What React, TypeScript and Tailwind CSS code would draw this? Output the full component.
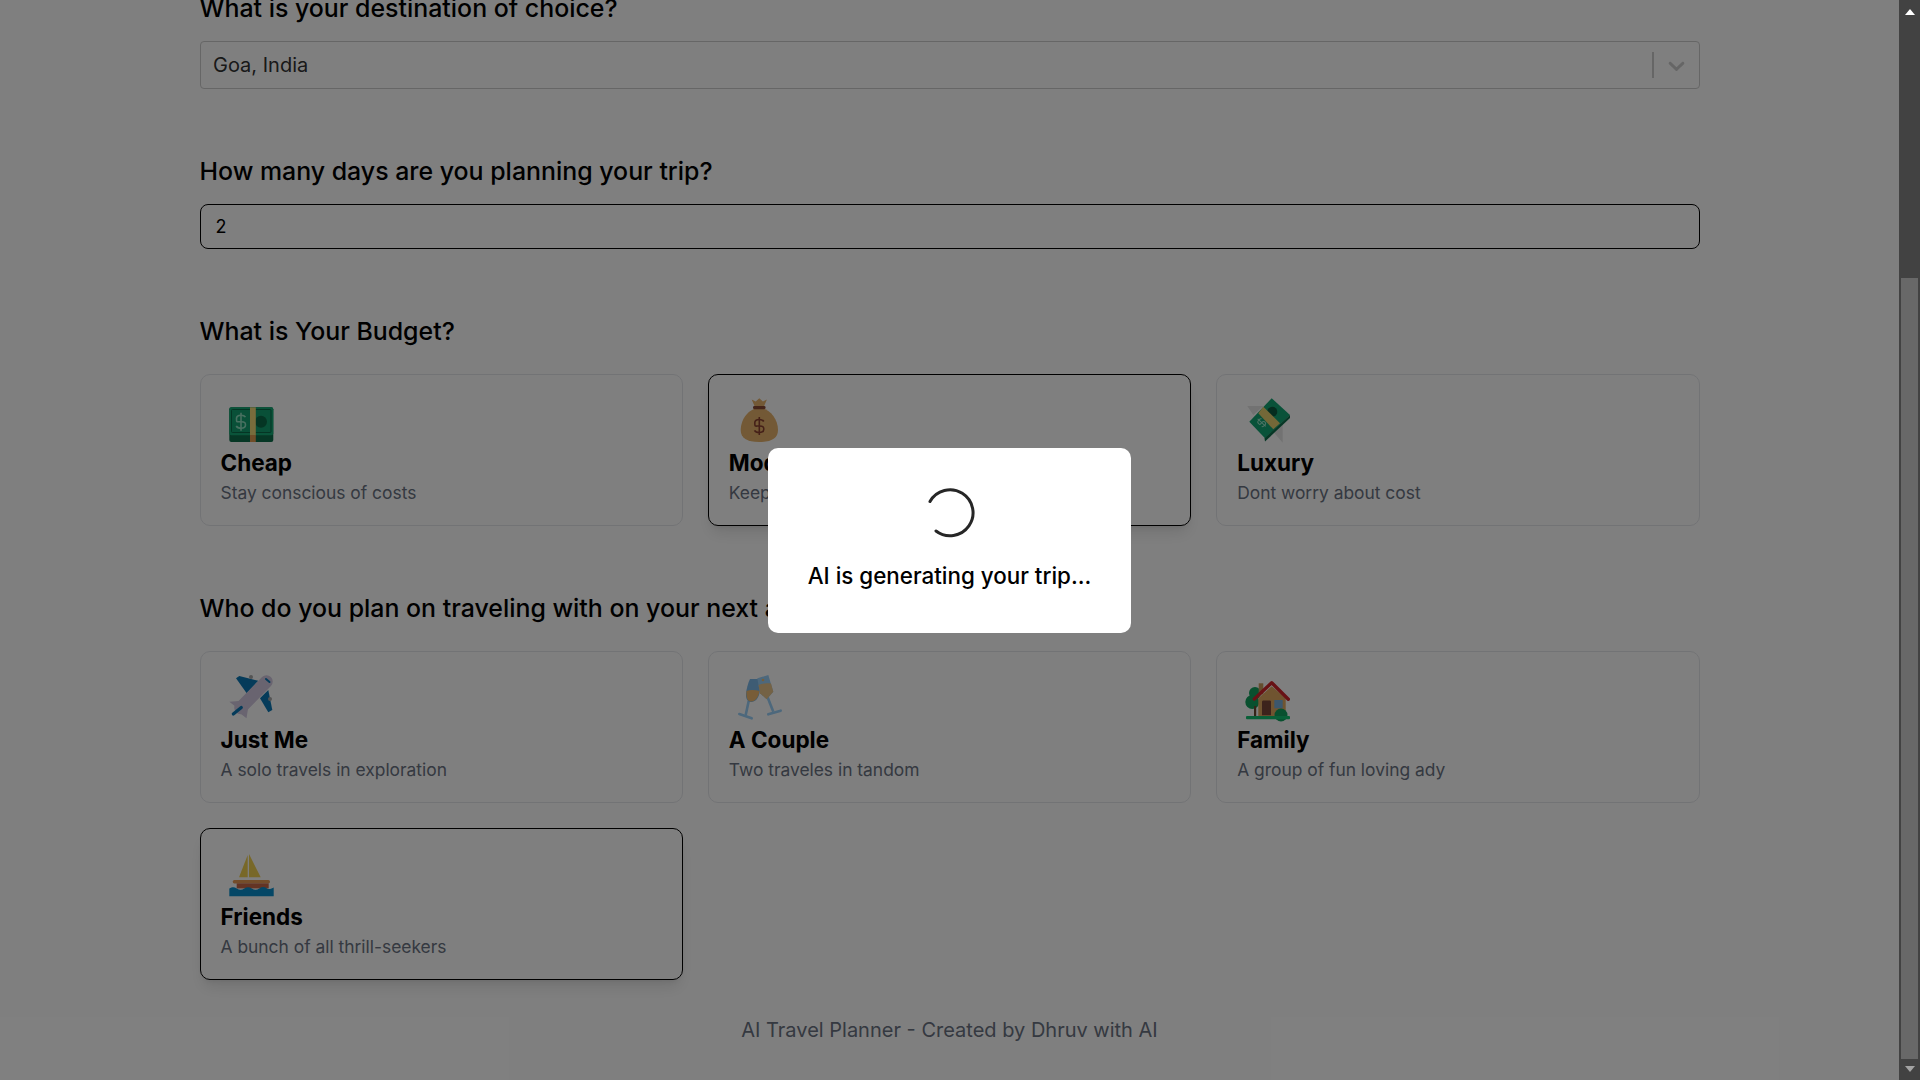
import type { ReactNode } from "react";

const Dollar = ({ x, y, h, color }: { x: number; y: number; h: number; color: string }) => {
  const u = h / 18;
  return (
    <g transform={`translate(${x} ${y}) scale(${u})`} fill="none" stroke={color} strokeWidth={1.6}>
      <path d="M4.5-4.5C3.5-6.2 1.500-6.500 0-6.500c-2.600 0-4.500 1.300-4.500 3.300C-4.500 1-4.500 0 0 0s4.500 1.500 4.500 3.300c0 2-2 3.200-4.500 3.200-1.800 0-3.800-.5-4.800-2.200" />
      <path d="M0-9v18" />
    </g>
  );
};

const Cash = () => (
  <>
    <rect x="8.3" y="12.3" width="44" height="34.7" rx="2" fill="#0c6e4a" />
    <rect x="8.3" y="12.3" width="44" height="28" rx="2" fill="#14a874" />
    <rect x="10.5" y="14.5" width="39.5" height="23" rx="1" fill="#12a070" stroke="#0a6a48" strokeWidth="1" />
    <circle cx="40" cy="26.7" r="6" fill="#0a6a48" />
    <Dollar x={20} y={26.7} h={18} color="#8fe0c0" />
    <rect x="29" y="12.3" width="5.8" height="28" fill="#f0d878" />
    <rect x="29" y="40" width="5.8" height="7" fill="#e09a50" />
  </>
);

const Bag = () => (
  <>
    <path d="M30.3 13C20 13 11.7 24 11.7 35c0 8 6 12 18.6 12S49 43 49 35C49 24 40.6 13 30.3 13z" fill="#e6b36c" />
    <path d="M22.7 4.500l4 2 3.600-3.200 3.600 3.200 4-2-3 7h-9.200z" fill="#e6b36c" />
    <rect x="24" y="11" width="12.6" height="3.2" rx="1.4" fill="#8a4a35" />
    <Dollar x={30.3} y={31} h={18} color="#8a4030" />
  </>
);

const Winged = () => (
  <>
    <path d="M10.3 11h16l-10 9z" fill="#e4e4e4" />
    <path d="M45.7 47.7V28.3l-9.4 8.4z" fill="#e4e4e4" />
    <path d="M34.7 3.3L53 20 28 43.3 12.3 26.7z" fill="#12a472" />
    <path d="M53 20v3L28 46.5l-.5-3.2z" fill="#0c6e4a" />
    <circle cx="35.3" cy="16.7" r="5" fill="#0a5a3f" />
    <path d="M26.3 11.7L43 28.3l-6.7 6L21.3 18.3z" fill="#e6d070" />
    <g transform="rotate(-47 24.7 27.7)">
      <Dollar x={24.7} y={27.7} h={11} color="#9be6c8" />
    </g>
  </>
);

const Plane = () => (
  <>
    <path d="M15 6.3L18.3 4l19 4.7L25.7 21.3z" fill="#0a77b5" />
    <path d="M39 26.3L47.3 18l4 20-4 2.3z" fill="#0a77b5" />
    <circle cx="30" cy="5" r="2" fill="#a8a8a8" />
    <circle cx="49" cy="27" r="2" fill="#a8a8a8" />
    <path d="M8.3 29.7l12.7-1L27 37l-1.500 9.300-5.500-4.300-3-5.500z" fill="#d2c8e0" />
    <path d="M45.500 9.500L19.500 36" stroke="#d2c8e0" strokeWidth="12.500" strokeLinecap="round" />
    <path d="M12.300 42l8-6.500" stroke="#0a77b5" strokeWidth="3.200" strokeLinecap="round" />
    <path d="M45 7l3.500 3" stroke="#0a77b5" strokeWidth="2" strokeLinecap="round" />
  </>
);

const Glasses = () => (
  <>
    <path d="M16.700 43l3-14" stroke="#9ad0f8" strokeWidth="2.600" />
    <path d="M10.300 42l12.400 4.300" stroke="#9ad0f8" strokeWidth="2.600" strokeLinecap="round" />
    <path d="M21 7h8c2 4 2.500 9 1.500 14-1 5-4 9-8.500 9-3.500 0-5.300-3.500-5-8 .4-5 2-11 4-15z" fill="#7db8e8" />
    <path d="M17.500 19c4-1.500 9-1 13 0-1 6-4 10.500-8.500 10.500-3.500 0-5-4-4.500-10.500z" fill="#f0bb70" />
    <path d="M38.500 25l5.800 14.700" stroke="#9ad0f8" strokeWidth="2.600" />
    <path d="M39.300 42.300l12.400-3.600" stroke="#9ad0f8" strokeWidth="2.600" strokeLinecap="round" />
    <path d="M28.300 6.300L39.300 3l5 16.700-6.600 7.600-6.700-6z" fill="#9ad0f8" />
    <path d="M29.500 13c5-2 8-2 12.500-1.500l2.300 8.200-6.600 7.600-6.700-6z" fill="#e8c48a" />
    <circle cx="34" cy="8" r="1.300" fill="#f0bb70" />
  </>
);

const House = () => (
  <>
    <circle cx="18" cy="21" r="6" fill="#12a05e" />
    <circle cx="15.300" cy="30" r="7" fill="#12a05e" />
    <rect x="17" y="34" width="2.200" height="10" fill="#6a4a30" />
    <rect x="21.700" y="11.300" width="4.600" height="11" fill="#c89a5c" />
    <path d="M21.300 26.300l13.400-12 14 12V44H21.300z" fill="#e0a860" />
    <path d="M17.300 27L34.700 10.700 51.300 27.300" fill="none" stroke="#d0242a" strokeWidth="3.400" strokeLinecap="round" strokeLinejoin="round" />
    <path d="M25 30c0-1 .5-1.500 1.500-1.500h6c1 0 1.500.5 1.500 1.500v13.300h-9z" fill="#7a4638" />
    <rect x="37.300" y="28" width="8.400" height="8.300" fill="#78aedb" />
    <circle cx="44" cy="43" r="6.500" fill="#12a05e" />
    <rect x="9" y="44" width="44" height="3.300" rx="1" fill="#12c070" />
  </>
);

const Boat = () => (
  <>
    <path d="M26.700 6v22.300H18z" fill="#f0d050" />
    <path d="M28 5l11.700 23.300H28z" fill="#f0d050" />
    <rect x="11.700" y="31" width="37.300" height="3.400" rx="1.700" fill="#e89a55" />
    <rect x="15.700" y="34.400" width="32" height="5" fill="#c86848" />
    <path d="M8.300 39.500c3-1.800 5-1.800 7.500 0s5 1.800 7.500 0 5-1.800 7.500 0 5 1.800 7.500 0 5-1.800 7.400-.3 3 1 7-.7v8.800H8.300z" fill="#0a8fcc" />
  </>
);

const Emoji = ({ children }: { children: ReactNode }) => (
  <svg width="60" height="52" viewBox="0 0 60 52" className="block">
    {children}
  </svg>
);

const Card = ({
  icon,
  title,
  desc,
  selected,
}: {
  icon: ReactNode;
  title: string;
  desc: string;
  selected?: boolean;
}) => (
  <div
    className={
      selected
        ? "h-[152px] rounded-[10px] border border-black bg-white px-5 pt-5 shadow-lg"
        : "h-[152px] rounded-[10px] border border-gray-200 bg-white px-5 pt-5"
    }
  >
    <Emoji>{icon}</Emoji>
    <h2 className="text-[22.5px] leading-8 font-bold text-black">{title}</h2>
    <p className="text-[17.4px] leading-7 text-gray-500">{desc}</p>
  </div>
);

const Heading = ({ children, className }: { children: ReactNode; className: string }) => (
  <h2 className={`text-[24.9px] leading-8 font-medium text-black ${className}`}>{children}</h2>
);

export default function App() {
  return (
    <div
      className="flex h-screen w-full overflow-hidden bg-white"
      style={{ fontFamily: "Inter, 'Noto Sans', sans-serif" }}
    >
      <div className="relative flex-1 overflow-hidden">
        <main className="mx-auto -mt-2 w-[1500px]">
          <Heading className="">What is your destination of choice?</Heading>
          <div className="mt-[17px] flex h-12 items-center rounded border border-[#cccccc] bg-white pl-[12.5px]">
            <span className="flex-1 text-xl text-[#333333]">Goa, India</span>
            <span className="h-[26px] w-0.5 bg-[#cccccc]" />
            <svg width="27" height="27" viewBox="0 0 20 20" className="mx-[9px] fill-[#cccccc]">
              <path d="M4.516 7.548c.436-.446 1.043-.481 1.576 0L10 11.295l3.908-3.747c.533-.481 1.141-.446 1.574 0 .436.445.408 1.197 0 1.615-.406.418-4.695 4.502-4.695 4.502a1.095 1.095 0 0 1-1.576 0S4.924 9.581 4.516 9.163c-.409-.418-.436-1.170 0-1.615z" />
            </svg>
          </div>

          <Heading className="mt-[66px]">How many days are you planning your trip?</Heading>
          <input
            readOnly
            value="2"
            className="mt-[17px] block h-[45px] w-full rounded-lg border border-black px-[15px] text-lg text-black outline-none"
          />

          <Heading className="mt-[66px]">What is Your Budget?</Heading>
          <div className="mt-[27px] grid grid-cols-3 gap-[25px]">
            <Card icon={<Cash />} title="Cheap" desc="Stay conscious of costs" />
            <Card icon={<Bag />} title="Moderate" desc="Keep cost on the average side" selected />
            <Card icon={<Winged />} title="Luxury" desc="Dont worry about cost" />
          </div>

          <Heading className="mt-[66px]">Who do you plan on traveling with on your next adventure?</Heading>
          <div className="mt-[27px] grid grid-cols-3 gap-[25px]">
            <Card icon={<Plane />} title="Just Me" desc="A solo travels in exploration" />
            <Card icon={<Glasses />} title="A Couple" desc="Two traveles in tandom" />
            <Card icon={<House />} title="Family" desc="A group of fun loving ady" />
            <Card icon={<Boat />} title="Friends" desc="A bunch of all thrill-seekers" selected />
          </div>

          <p className="mt-9 text-center text-xl text-gray-500">AI Travel Planner - Created by Dhruv with AI</p>
        </main>

        <div className="absolute inset-0 flex items-center justify-center bg-black/50">
          <div className="flex h-[185px] w-[363px] flex-col items-center rounded-[10px] bg-white pt-10">
            <svg width="50" height="50" viewBox="0 0 50 50" fill="none" stroke="#262626" strokeWidth="3" strokeLinecap="round">
              <path d="M5 13.500A23 23 0 1 1 11 43" />
            </svg>
            <p className="mt-[22px] text-[22.4px] leading-8 font-medium text-black">AI is generating your trip...</p>
          </div>
        </div>
      </div>

      <div className="flex w-[21px] flex-col items-center bg-[#424242]">
        <svg width="10" height="6" viewBox="0 0 10 6" className="mt-[9px] fill-white">
          <path d="M5 0l5 6H0z" />
        </svg>
        <div className="mt-[263px] h-[781px] w-[17px] bg-[#686868]" />
        <svg width="10" height="6" viewBox="0 0 10 6" className="mt-[7px] fill-[#a3a3a3]">
          <path d="M0 0h10L5 6z" />
        </svg>
      </div>
    </div>
  );
}
